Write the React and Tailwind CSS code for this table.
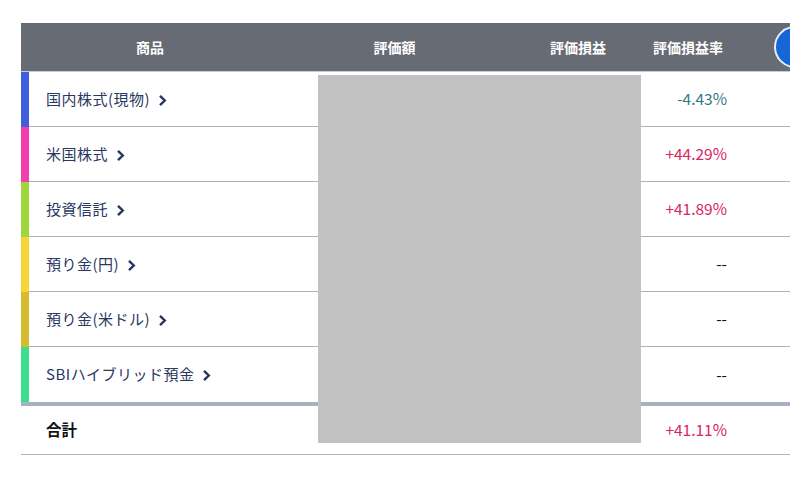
import React from 'react';

const rows = [
  { name: '国内株式(現物)', color: 'bg-[#3f5fdc]', rate: '-4.43%', tone: 'text-[#2f7a86]' },
  { name: '米国株式', color: 'bg-[#f23fae]', rate: '+44.29%', tone: 'text-[#d6265e]' },
  { name: '投資信託', color: 'bg-[#9fd63e]', rate: '+41.89%', tone: 'text-[#d6265e]' },
  { name: '預り金(円)', color: 'bg-[#f6d534]', rate: '--', tone: 'text-[#111111]' },
  { name: '預り金(米ドル)', color: 'bg-[#d5bb30]', rate: '--', tone: 'text-[#111111]' },
  { name: 'SBIハイブリッド預金', color: 'bg-[#3ddf8e]', rate: '--', tone: 'text-[#111111]' },
];

const Chevron = () => (
  <svg width="9" height="13" viewBox="0 0 9 13" className="ml-[8px] mt-[2px]">
    <polyline points="2,1.8 6.8,6.5 2,11.2" fill="none" stroke="#26345e" strokeWidth="2.4" />
  </svg>
);

export default function App() {
  return (
    <div
      className="relative w-[790px] h-[479px] overflow-hidden bg-white"
      style={{ fontFamily: '"Noto Sans CJK JP", "Noto Sans", sans-serif' }}
    >
      <div className="pt-[23px] pl-[21px] w-[830px]">
        {/* header */}
        <div className="relative flex items-center h-[49px] bg-[#676b74] border-b border-[#c9cdd5] text-white text-[14px] font-bold">
          <div className="w-[258px] text-center">商品</div>
          <div className="w-[231px] text-center">評価額</div>
          <div className="w-[96px] text-right">評価損益</div>
          <div className="w-[117px] text-right">評価損益率</div>
          <div className="absolute left-[753px] top-[3px] w-[42px] h-[42px] rounded-full bg-[#1766d6] border-2 border-[#e8eef8]" />
        </div>

        {/* rows */}
        {rows.map((r, i) => (
          <div key={r.name} className="flex h-[55px]">
            <div className={`w-[8px] ${r.color}`} />
            <div
              className={`flex-1 flex items-center ${i === rows.length - 1 ? '' : 'border-b border-[#aab1bd]'}`}
            >
              <div className="w-[698px] flex items-center pl-[17px] text-[#2a3760]">
                <span className="text-[15px] tracking-[0.5px]">{r.name}</span>
                <Chevron />
                <span className={`ml-auto text-[15.5px] ${r.tone}`}>{r.rate}</span>
              </div>
            </div>
          </div>
        ))}
        <div className="h-[4px] bg-[#a6b1c2]" />

        {/* total */}
        <div className="flex items-center h-[49px] border-b border-[#b3b6bd]">
          <div className="w-[706px] flex items-center pl-[25px]">
            <span className="text-[15.5px] font-bold text-[#111111]">合計</span>
            <span className="ml-auto text-[15.5px] text-[#d6265e]">+41.11%</span>
          </div>
        </div>
      </div>

      {/* redacted area */}
      <div className="absolute left-[318px] top-[75px] w-[323px] h-[368px] bg-[#c2c2c2]" />
    </div>
  );
}
